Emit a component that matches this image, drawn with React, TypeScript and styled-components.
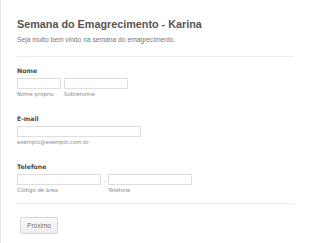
import React from "react";
import styled, { createGlobalStyle } from "styled-components";

const Global = createGlobalStyle`
  html, body { margin: 0; padding: 0; background: #fff; }
  body { width: 310px; height: 243px; overflow: hidden; }
`;

const Page = styled.div`
  width: 310px;
  height: 243px;
  box-sizing: border-box;
  border-left: 1px solid #e8e8e8;
  padding: 18px 16px 0 16px;
  font-family: "Liberation Sans", Arial, sans-serif;
`;

const Header = styled.div`
  display: flex;
  flex-direction: column;
  gap: 4px;
  padding-bottom: 12px;
  border-bottom: 1px solid #ececec;
`;

const Title = styled.h1`
  margin: 0;
  font-size: 10.8px;
  line-height: 13px;
  font-weight: bold;
  color: #555;
`;

const Subtitle = styled.p`
  margin: 0;
  font-size: 6.7px;
  line-height: 9px;
  color: #777;
`;

const Field = styled.div<{ $top: number }>`
  display: flex;
  flex-direction: column;
  margin-top: ${(p) => p.$top}px;
`;

const Label = styled.label`
  font-family: "DejaVu Sans", Verdana, sans-serif;
  font-size: 6.2px;
  line-height: 8px;
  font-weight: bold;
  color: #4a4a4a;
  margin-bottom: 3px;
`;

const Row = styled.div<{ $gap: number }>`
  display: flex;
  align-items: flex-start;
  gap: ${(p) => p.$gap}px;
`;

const Sub = styled.div`
  display: flex;
  flex-direction: column;
  gap: 2px;
`;

const Input = styled.div<{ $w: number }>`
  width: ${(p) => p.$w}px;
  height: 11px;
  box-sizing: border-box;
  border: 1px solid #dedede;
  background: #fff;
`;

const Hint = styled.span`
  font-family: "DejaVu Sans", Verdana, sans-serif;
  font-size: 5.4px;
  line-height: 6px;
  color: #888;
`;

const Dash = styled.span`
  font-family: "DejaVu Sans", Verdana, sans-serif;
  font-size: 6px;
  line-height: 13px;
  color: #999;
  width: 7px;
  text-align: center;
`;

const Footer = styled.div`
  margin-top: 10px;
  border-top: 1px solid #ececec;
  padding-top: 10px;
  padding-left: 3px;
`;

const Button = styled.button`
  width: 38px;
  height: 17px;
  padding: 0;
  box-sizing: border-box;
  border: 1px solid #d6d6d6;
  border-radius: 2px;
  background: linear-gradient(#fafafa, #eeeeee);
  font-family: "Liberation Sans", Arial, sans-serif;
  font-size: 6.5px;
  color: #777;
`;

export default function App() {
  return (
    <>
      <Global />
      <Page>
        <Header>
          <Title>Semana do Emagrecimento - Karina</Title>
          <Subtitle>Seja muito bem vindo na semana do emagrecimento.</Subtitle>
        </Header>
        <Field $top={10}>
          <Label>Nome</Label>
          <Row $gap={3}>
            <Sub>
              <Input $w={44} />
              <Hint>Nome próprio</Hint>
            </Sub>
            <Sub>
              <Input $w={64} />
              <Hint>Sobrenome</Hint>
            </Sub>
          </Row>
        </Field>
        <Field $top={18}>
          <Label>E-mail</Label>
          <Sub>
            <Input $w={124} />
            <Hint>exemplo@exemplo.com.br</Hint>
          </Sub>
        </Field>
        <Field $top={18}>
          <Label>Telefone</Label>
          <Row $gap={0}>
            <Sub>
              <Input $w={84} />
              <Hint>Código de área</Hint>
            </Sub>
            <Dash>-</Dash>
            <Sub>
              <Input $w={84} />
              <Hint>Telefone</Hint>
            </Sub>
          </Row>
        </Field>
        <Footer>
          <Button>Próximo</Button>
        </Footer>
      </Page>
    </>
  );
}
